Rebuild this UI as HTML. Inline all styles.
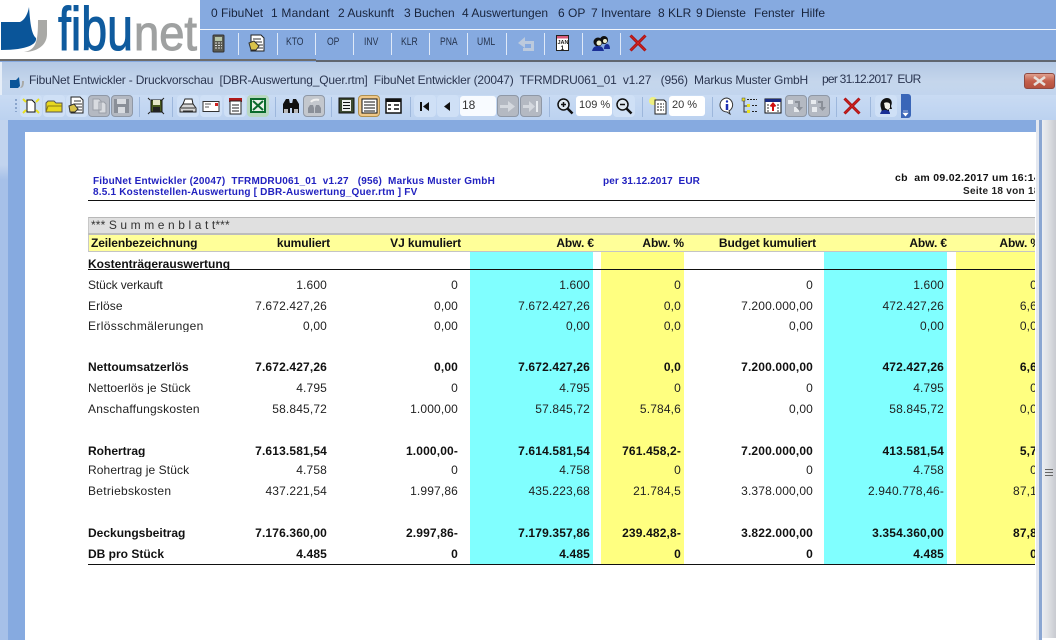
<!DOCTYPE html>
<html><head><meta charset="utf-8"><style>
html,body{margin:0;padding:0;width:1056px;height:640px;overflow:hidden;background:#86aae0}
*{box-sizing:border-box}
body{font-family:"Liberation Sans",sans-serif;position:relative;color:#222}
.a{position:absolute}
.t{position:absolute;white-space:pre}
.m{position:absolute;top:6px;font-size:12px;line-height:14px;color:#18243c;white-space:pre}
.sep{position:absolute;top:33px;width:1px;height:22px;background:#dfe9f8}
.lb{position:absolute;top:37px;font-size:11px;line-height:11px;color:#26344e;white-space:pre;transform:scaleX(.78);transform-origin:0 0}
.ts{position:absolute;top:97px;width:1px;height:20px;background:#9db7dc}
.btn{position:absolute;top:95px;width:22px;height:22px;border-radius:4px;background:#cfe0f6}
.btn.g{background:#b4b9c2;border:1px solid #8f98a6}
.ic{position:absolute}
.inp{position:absolute;top:96px;height:20px;background:#fff;font-size:11px;line-height:19px;color:#333;white-space:pre}
.r{position:absolute;left:0;width:1035px;height:15px;overflow:hidden;font-size:12px;line-height:15px;color:#222}
.r span{position:absolute;top:0;white-space:pre;letter-spacing:.15px}
.r.b{font-weight:bold;color:#111}
.r span:nth-child(1){left:88px;letter-spacing:.1px}
.r.b span:nth-child(1){letter-spacing:0}
.r span:nth-child(2){right:708px}
.r span:nth-child(3){right:577px}
.r span:nth-child(4){right:445px}
.r span:nth-child(5){right:354px}
.r span:nth-child(6){right:222px}
.r span:nth-child(7){right:91px}
.r span:nth-child(8){right:-2px}
.h span,.r.h span:nth-child(1){letter-spacing:-.1px}
.h span:nth-child(2){right:705px}
.h span:nth-child(3){right:574px}
.h span:nth-child(4){right:441px}
.h span:nth-child(5){right:351px}
.h span:nth-child(6){right:219px}
.h span:nth-child(7){right:88px}
.h span:nth-child(8){right:-6px}
.blue{font-size:10px;line-height:11px;font-weight:bold;color:#2222c0;letter-spacing:.2px}
</style></head><body>

<!-- top logo -->
<div class="a" style="left:0;top:0;width:200px;height:59px;background:#fff;overflow:hidden">
<svg width="200" height="59" style="position:absolute;left:0;top:0">
<path d="M1 22 L20 22 C25 20 28 13 29 7 C30 20 31 34 36 38 C37 44 28 50 1 50 Z" fill="#0a5599"/>
<path d="M24 52 C36 50 38 42 38 20 L47 20 L47 34 C47 46 36 52 24 52 Z" fill="#a9a9a6"/>
<text x="58" y="50" font-family="Liberation Sans" font-size="61" fill="#0f5b9e" stroke="#0f5b9e" stroke-width="1.100" textLength="75" lengthAdjust="spacingAndGlyphs">fibu</text>
<text x="134" y="50" font-family="Liberation Sans" font-size="49" fill="#9fa1a1" stroke="#9fa1a1" stroke-width="1" textLength="63" lengthAdjust="spacingAndGlyphs">net</text>
</svg>
</div>

<!-- menu -->
<div class="a" style="left:200px;top:29px;width:856px;height:1px;background:#f2f6fc"></div>
<span class="m" style="left:211px">0 FibuNet</span>
<span class="m" style="left:271px;letter-spacing:.2px">1 Mandant</span>
<span class="m" style="left:338px">2 Auskunft</span>
<span class="m" style="left:404px">3 Buchen</span>
<span class="m" style="left:462px">4 Auswertungen</span>
<span class="m" style="left:558px">6 OP</span>
<span class="m" style="left:591px">7 Inventare</span>
<span class="m" style="left:658px">8 KLR</span>
<span class="m" style="left:696px;letter-spacing:-.1px">9 Dienste</span>
<span class="m" style="left:754px">Fenster</span>
<span class="m" style="left:801px">Hilfe</span>

<!-- top toolbar -->
<svg class="ic" style="left:212px;top:34px" width="14" height="20"><rect x="1" y="1" width="11" height="17" rx="1" fill="#5a5a50" stroke="#333"/><rect x="3" y="3" width="7" height="4" fill="#b6c4a6"/><path d="M3 9h7M3 11.5h7M3 14h7" stroke="#ddd" stroke-dasharray="2 1"/></svg>
<div class="sep" style="left:238px"></div>
<svg class="ic" style="left:248px;top:34px" width="18" height="18"><path d="M3 1h10l3 3v13H3z" fill="#fff" stroke="#222"/><path d="M5 5h8M5 8h9M9 11h6M9 14h6" stroke="#333"/><path d="M1 9l5-2 5 5-3 4H3z" fill="#d8c24a" stroke="#333"/></svg>
<div class="sep" style="left:277px"></div>
<span class="lb" style="left:286px">KTO</span>
<div class="sep" style="left:315px"></div>
<span class="lb" style="left:327px">OP</span>
<div class="sep" style="left:353px"></div>
<span class="lb" style="left:364px">INV</span>
<div class="sep" style="left:391px"></div>
<span class="lb" style="left:401px">KLR</span>
<div class="sep" style="left:429px"></div>
<span class="lb" style="left:440px">PNA</span>
<div class="sep" style="left:467px"></div>
<span class="lb" style="left:477px">UML</span>
<div class="sep" style="left:506px"></div>
<svg class="ic" style="left:516px;top:33px" width="22" height="20"><path d="M2 10l7-6v4h9v10H7v-3h8v-4H9v4z" fill="#bccadd"/></svg>
<div class="sep" style="left:544px"></div>
<svg class="ic" style="left:555px;top:34px" width="16" height="18"><rect x="1.500" y="1.500" width="12" height="15" fill="#fff" stroke="#222"/><rect x="2" y="2" width="11" height="2.500" fill="#d85a7a"/><text x="2.500" y="10" font-family="Liberation Sans" font-size="5.500" font-weight="bold" fill="#222">JAN</text><text x="5.500" y="16" font-family="Liberation Sans" font-size="6.500" font-weight="bold" fill="#222">1</text></svg>
<div class="sep" style="left:582px"></div>
<svg class="ic" style="left:591px;top:34px" width="20" height="18"><ellipse cx="13" cy="6" rx="4" ry="4" fill="#111"/><ellipse cx="7" cy="8" rx="4.500" ry="4.500" fill="#111"/><ellipse cx="8" cy="9" rx="2.500" ry="2.500" fill="#eec"/><ellipse cx="14" cy="7" rx="2" ry="2" fill="#eec"/><path d="M1 17c1-4 3-5 6-5s5 1 6 5z" fill="#1a2f96"/><path d="M13 15c0-3 1-5 3-5s3 2 3 5z" fill="#1a2f96"/></svg>
<div class="sep" style="left:620px"></div>
<svg class="ic" style="left:628px;top:34px" width="20" height="18"><path d="M2.500 1.500 L17.500 16.500 M17.500 1.500 L2.500 16.500" stroke="#a31212" stroke-width="3"/><path d="M2.500 1.500 L17.500 16.500 M17.500 1.500 L2.500 16.500" stroke="#d42020" stroke-width="1"/></svg>

<!-- dark divider -->
<div class="a" style="left:0;top:59px;width:316px;height:2px;background:#6d6d6d"></div>
<div class="a" style="left:316px;top:60px;width:740px;height:2px;background:#5f6670"></div>

<!-- window title -->
<div class="a" style="left:0;top:62px;width:1056px;height:33px;background:linear-gradient(#b3c8e4,#c5d6ec 60%,#c2d5ee)"></div>
<div class="a" style="left:0;top:62px;width:2px;height:33px;background:#e6eef8"></div>
<svg class="ic" style="left:9px;top:76px" width="16" height="13"><path d="M1 4h6l3-3 1 9-2 2H1z" fill="#0a5599"/><path d="M11 12c3 0 4-2 4-7h-2c0 3 0 5-2 7z" fill="#a9a9a6"/></svg>
<span class="t" style="left:29px;top:73px;font-size:12px;line-height:14px;color:#2a3550;letter-spacing:-.19px">FibuNet Entwickler - Druckvorschau  [DBR-Auswertung_Quer.rtm]  FibuNet Entwickler (20047)  TFRMDRU061_01  v1.27   (956)  Markus Muster GmbH</span>
<span class="t" style="left:822px;top:72px;font-size:12px;line-height:14px;color:#2a3550;letter-spacing:-.75px">per 31.12.2017  EUR</span>
<div class="a" style="left:1024px;top:73px;width:31px;height:16px;border-radius:3px;background:linear-gradient(#dfa08f,#c4604c 50%,#b5503e);border:1px solid #8e4a42"></div>
<svg class="ic" style="left:1032px;top:76px" width="15" height="10"><path d="M2 1l11 8M13 1L2 9" stroke="#e6e0dc" stroke-width="2.600"/></svg>

<!-- toolbar bar -->
<div class="a" style="left:0;top:95px;width:1056px;height:25px;background:linear-gradient(#c9dbf3,#bcd2f0)"></div>
<div class="a" style="left:901px;top:94px;width:10px;height:24px;background:#3a66b8;border-radius:0 3px 3px 0"></div>
<svg class="ic" style="left:902px;top:110px" width="8" height="8"><path d="M1 1h5M1 3h5L3.500 6z" fill="#fff" stroke="#fff" stroke-width=".6"/></svg>
<div class="a" style="left:15px;top:99px;width:2px;height:13px;background:repeating-linear-gradient(#8aa5cc 0 2px,transparent 2px 4px)"></div>

<!-- buttons row -->
<div class="btn" style="left:20px"></div>
<svg class="ic" style="left:20px;top:96px" width="22" height="20"><path d="M3 3l3 3M19 3l-3 3M3 17l3-3M19 17l-3-3" stroke="#e8e020" stroke-width="2"/><path d="M7 4h5l3 3v9H7z" fill="#fff" stroke="#111"/></svg>
<div class="btn" style="left:43px"></div>
<svg class="ic" style="left:43px;top:96px" width="22" height="20"><path d="M3 7l2-2h6l2 2h6v9H3z" fill="#e8d820" stroke="#555"/><path d="M3 16l2-6h14" fill="none" stroke="#8a7a10"/></svg>
<div class="btn" style="left:66px"></div>
<svg class="ic" style="left:67px;top:96px" width="20" height="19"><path d="M4 1h9l3 3v13H4z" fill="#fff" stroke="#222"/><path d="M7 5h7M7 8h8M10 11h5M10 14h5" stroke="#333"/><path d="M2 10l5-2 4 5-3 3H3z" fill="#d8c24a" stroke="#333"/></svg>
<div class="btn g" style="left:88px"></div>
<svg class="ic" style="left:91px;top:98px" width="18" height="16"><path d="M2 1h6l2 2v9H2zM8 4h5l2 2v9H8z" fill="#d8dbe0" stroke="#9a9fa8"/></svg>
<div class="btn g" style="left:111px"></div>
<svg class="ic" style="left:113px;top:98px" width="18" height="16"><rect x="1" y="1" width="15" height="14" fill="#8a8f98"/><rect x="4" y="1" width="9" height="5" fill="#d8dbe0"/><rect x="5" y="9" width="7" height="6" fill="#d8dbe0"/></svg>
<div class="ts" style="left:139px"></div>
<svg class="ic" style="left:146px;top:96px" width="20" height="20"><path d="M2 2l2 2M18 2l-2 2M2 18l2-2M18 18l-2-2" stroke="#222"/><rect x="5" y="4" width="11" height="12" fill="#4a5a20" stroke="#111"/><rect x="7" y="4" width="7" height="5" fill="#e6e6c8"/><rect x="7" y="11" width="7" height="5" fill="#222"/></svg>
<div class="ts" style="left:172px"></div>
<div class="btn" style="left:177px"></div>
<svg class="ic" style="left:178px;top:97px" width="20" height="18"><path d="M5 7l2-5h7l1 5z" fill="#fff" stroke="#222"/><path d="M2 11l3-4h10l3 4v4H2z" fill="#d6d6d6" stroke="#222"/><path d="M3 11h14M5 14h10" stroke="#333"/></svg>
<div class="btn" style="left:200px"></div>
<svg class="ic" style="left:202px;top:100px" width="19" height="14"><rect x="1" y="1.500" width="16" height="10" fill="#fff" stroke="#333"/><path d="M3 4h6M3 7h4" stroke="#555"/><rect x="13" y="3" width="3" height="3" fill="#d02020"/></svg>
<div class="btn" style="left:224px"></div>
<svg class="ic" style="left:226px;top:96px" width="19" height="20"><rect x="3" y="2" width="13" height="4" fill="#b01818"/><rect x="4" y="5" width="11" height="13" fill="#fff" stroke="#222"/><path d="M6 9h7M6 12h7M6 15h7" stroke="#222"/></svg>
<div class="btn" style="left:247px;background:#b8d8c0"></div>
<svg class="ic" style="left:249px;top:97px" width="18" height="17"><rect x="1" y="1" width="16" height="15" fill="#0b6b2c"/><rect x="3" y="3" width="12" height="11" fill="#e8f2e8"/><path d="M4 4l10 9M14 4L4 13" stroke="#0b6b2c" stroke-width="2"/></svg>
<div class="ts" style="left:275px"></div>
<svg class="ic" style="left:281px;top:97px" width="20" height="18"><path d="M2 16V7l3-5h3l1 5v9zM11 16V7l1-5h3l3 5v9z" fill="#111"/><rect x="7" y="6" width="6" height="5" fill="#111"/><rect x="3" y="12" width="4" height="4" fill="#bbb"/><rect x="13" y="12" width="4" height="4" fill="#bbb"/></svg>
<div class="btn g" style="left:303px;background:#c3c7cd"></div>
<svg class="ic" style="left:305px;top:97px" width="19" height="18"><path d="M3 16v-5l2-3h3l1 3v5zM10 16v-5l1-3h3l2 3v5z" fill="#8a8f98"/><path d="M6 5a6 4 0 0 1 8-2" fill="none" stroke="#f0f0f0" stroke-width="2"/></svg>
<div class="ts" style="left:331px"></div>
<svg class="ic" style="left:338px;top:97px" width="17" height="17"><rect x="1" y="1" width="15" height="15" fill="#3d4a30" stroke="#111"/><rect x="4" y="3" width="9" height="11" fill="#eee"/><path d="M5 5.500h7M5 8.500h7M5 11.500h7" stroke="#111"/></svg>
<div class="btn" style="left:358px;background:#f0c888;border:1px solid #b09050"></div>
<svg class="ic" style="left:361px;top:98px" width="17" height="16"><rect x="1" y="1" width="15" height="14" fill="#fff" stroke="#111"/><path d="M3 4h11M3 7h11M3 10h11M3 13h11" stroke="#111"/></svg>
<svg class="ic" style="left:385px;top:98px" width="17" height="16"><rect x="1" y="1" width="15" height="14" fill="#fff" stroke="#111" stroke-width="1.500"/><rect x="1" y="1" width="15" height="3" fill="#111"/><path d="M3 7h3M3 11h3M9 7h5M9 11h5" stroke="#111" stroke-width="1.500"/></svg>
<div class="ts" style="left:410px"></div>
<div class="btn" style="left:414px"></div>
<svg class="ic" style="left:418px;top:100px" width="14" height="13"><path d="M2 2h2v9H2zM11 2v9L5 6.500z" fill="#111"/></svg>
<div class="btn" style="left:437px"></div>
<svg class="ic" style="left:441px;top:100px" width="12" height="13"><path d="M9 2v9L3 6.500z" fill="#111"/></svg>
<div class="inp" style="left:460px;width:36px;padding-left:2px;font-size:12px;border-radius:3px;background:#f8fbff">18</div>
<div class="btn g" style="left:497px"></div>
<svg class="ic" style="left:499px;top:99px" width="18" height="15"><path d="M1 6h8V2l7 5.500-7 5.500V9H1z" fill="#d4d8de"/></svg>
<div class="btn g" style="left:520px"></div>
<svg class="ic" style="left:522px;top:99px" width="18" height="15"><path d="M1 6h6V2l6 5.500-6 5.500V9H1z" fill="#d4d8de"/><rect x="14" y="2" width="2" height="11" fill="#e8ecf0"/></svg>
<div class="ts" style="left:549px"></div>
<svg class="ic" style="left:556px;top:97px" width="19" height="18"><circle cx="7.500" cy="7.500" r="5.500" fill="#dfe8f0" stroke="#111" stroke-width="1.500"/><path d="M5 7.500h5M7.500 5v5" stroke="#111" stroke-width="1.500"/><path d="M11.500 11.500l5 5" stroke="#111" stroke-width="2.500"/></svg>
<div class="inp" style="left:576px;width:36px;padding-left:3px;border-radius:3px">109 %</div>
<div class="btn" style="left:613px"></div>
<svg class="ic" style="left:615px;top:97px" width="19" height="18"><circle cx="7.500" cy="7.500" r="5.500" fill="#dfe8f0" stroke="#111" stroke-width="1.500"/><path d="M5 7.500h5" stroke="#111" stroke-width="1.500"/><path d="M11.500 11.500l5 5" stroke="#111" stroke-width="2.500"/></svg>
<div class="ts" style="left:642px"></div>
<svg class="ic" style="left:648px;top:96px" width="20" height="20"><circle cx="5" cy="5" r="4" fill="#eef080"/><path d="M7 4h9l2 2v12H7z" fill="#fff" stroke="#222"/><path d="M9 8h7M9 11h7M9 14h7" stroke="#222" stroke-dasharray="2 1"/></svg>
<div class="inp" style="left:669px;width:36px;padding-left:3px;border-radius:3px">20 %</div>
<div class="ts" style="left:712px"></div>
<svg class="ic" style="left:718px;top:97px" width="18" height="18"><path d="M9 1a7 7 0 1 0 0 14l3 2-1-3a7 7 0 0 0-2-13z" fill="#fff" stroke="#333"/><circle cx="9" cy="4.500" r="1.200" fill="#1c2eb0"/><path d="M9 7v6" stroke="#1c2eb0" stroke-width="2.500"/></svg>
<svg class="ic" style="left:741px;top:97px" width="18" height="18"><rect x="1" y="1" width="3" height="3" fill="#e8e020" stroke="#444" stroke-width=".5"/><path d="M3 4v11h3M3 9h3" stroke="#333" fill="none"/><rect x="6" y="7" width="3" height="3" fill="#e8e020"/><rect x="6" y="13" width="3" height="3" fill="#e8e020"/><path d="M6 2.500h10M11 8.500h6M11 14.500h6" stroke="#222" stroke-dasharray="2 1"/></svg>
<svg class="ic" style="left:764px;top:98px" width="18" height="16"><rect x="1" y="1" width="16" height="14" fill="#fff" stroke="#111"/><rect x="1" y="1" width="16" height="3" fill="#1a2a80"/><path d="M9 13V6M6.500 8.500L9 5.500l2.500 3" stroke="#d01010" stroke-width="2" fill="none"/><path d="M3 7h2M3 10h2M3 13h2M13 7h2M13 10h2M13 13h2" stroke="#333"/></svg>
<div class="btn g" style="left:785px"></div>
<svg class="ic" style="left:787px;top:98px" width="19" height="16"><path d="M1 2h5v4H1zM7 9h5v5H7z" fill="#e8ebef"/><path d="M13 3v6l3 0-3.500 4L9 9h2V5H8V3z" fill="#8a8f98"/></svg>
<div class="btn g" style="left:808px"></div>
<svg class="ic" style="left:810px;top:98px" width="19" height="16"><path d="M1 2h5v4H1zM2 9h5v5H2z" fill="#e8ebef"/><path d="M13 3v6l3 0-3.500 4L9 9h2V5H8V3z" fill="#8a8f98"/></svg>
<div class="ts" style="left:836px"></div>
<svg class="ic" style="left:842px;top:97px" width="20" height="18"><path d="M2.500 1.500 L17.500 16.500 M17.500 1.500 L2.500 16.500" stroke="#a31212" stroke-width="3"/><path d="M2.500 1.500 L17.500 16.500 M17.500 1.500 L2.500 16.500" stroke="#d42020" stroke-width="1"/></svg>
<div class="ts" style="left:870px"></div>
<div class="btn" style="left:875px"></div>
<svg class="ic" style="left:877px;top:97px" width="18" height="18"><path d="M4 11c-2-6 2-10 6-10s6 4 4 8l1 3-3 0v3H5z" fill="#111"/><path d="M7 6c2-1 5-1 6 1l0 4-2 2-3-2z" fill="#f0f0e8"/><path d="M3 17c1-3 2-4 5-4s5 1 5 4z" fill="#1a2f96"/></svg>

<!-- window body -->
<div class="a" style="left:0;top:120px;width:8px;height:520px;background:linear-gradient(#c2d4ee,#c2d4ee 45px,#a6c0e8 60px)"></div>
<div class="a" style="left:8px;top:120px;width:1028px;height:12px;background:#86aae0"></div>
<div class="a" style="left:8px;top:132px;width:17px;height:508px;background:#86aae0"></div>

<!-- page -->
<div class="a" style="left:25px;top:132px;width:1011px;height:508px;background:#fff"></div>

<!-- right side frame -->
<div class="a" style="left:1036px;top:120px;width:3px;height:520px;background:#e4e8f0"></div>
<div class="a" style="left:1039px;top:120px;width:3px;height:520px;background:#8aa6d2"></div>
<div class="a" style="left:1042px;top:120px;width:14px;height:518px;background:linear-gradient(90deg,#eceef2,#dcdee2 50%,#c8cad0)"></div>
<div class="a" style="left:1042px;top:638px;width:14px;height:2px;background:#fff"></div>
<svg class="ic" style="left:1045px;top:468px" width="8" height="9"><path d="M0 1.500h8M0 4.500h8M0 7.500h8" stroke="#666"/></svg>

<!-- report header -->
<span class="t blue" style="left:93px;top:176px">FibuNet Entwickler (20047)  TFRMDRU061_01  v1.27   (956)  Markus Muster GmbH</span>
<span class="t blue" style="left:93px;top:187px">8.5.1 Kostenstellen-Auswertung [ DBR-Auswertung_Quer.rtm ] FV</span>
<span class="t blue" style="left:603px;top:176px;letter-spacing:.1px">per 31.12.2017  EUR</span>
<div class="a" style="left:0;top:165px;width:1035px;height:40px;overflow:hidden">
<span class="t" style="left:895px;top:7px;font-size:10.500px;line-height:13px;font-weight:bold;color:#111;letter-spacing:.3px">cb  am 09.02.2017 um 16:14</span>
<span class="t" style="left:963px;top:21px;font-size:10px;line-height:12px;font-weight:bold;color:#222;letter-spacing:.3px">Seite 18 von 18</span>
</div>
<div class="a" style="left:88px;top:200px;width:947px;height:1px;background:#111"></div>

<!-- grey + header bands -->
<div class="a" style="left:88px;top:217px;width:947px;height:17px;background:#e0e0e0;border-top:1px solid #b8b8b8;border-left:1px solid #c8c8c8"></div>
<div class="a" style="left:88px;top:233px;width:947px;height:2px;background:#bdbdbd"></div>
<div class="a" style="left:88px;top:235px;width:947px;height:17px;background:#ffff99;border-left:1px solid #c8c8c8;border-bottom:1px solid #c4c4c4"></div>
<span class="t" style="left:91px;top:218px;font-size:12px;line-height:14px;color:#333;letter-spacing:.12px">*** S u m m e n b l a t t***</span>

<!-- coloured columns -->
<div class="a" style="left:470px;top:252px;width:123px;height:312px;background:#80ffff"></div>
<div class="a" style="left:601px;top:252px;width:83px;height:312px;background:#ffff80"></div>
<div class="a" style="left:824px;top:252px;width:123px;height:312px;background:#80ffff"></div>
<div class="a" style="left:956px;top:252px;width:79px;height:312px;background:#ffff80"></div>

<div class="r b h" style="top:236px"><span style="left:91px">Zeilenbezeichnung</span><span>kumuliert</span><span>VJ kumuliert</span><span>Abw. €</span><span>Abw. %</span><span>Budget kumuliert</span><span>Abw. €</span><span>Abw. %</span></div>

<div class="r b" style="top:257px;height:12px"><span>Kostenträgerauswertung</span></div>
<div class="a" style="left:88px;top:269px;width:947px;height:1px;background:#111"></div>

<div class="r" style="top:278px"><span style="letter-spacing:-.1px">Stück verkauft</span><span>1.600</span><span>0</span><span>1.600</span><span>0</span><span>0</span><span>1.600</span><span>0</span></div>
<div class="r" style="top:299px"><span>Erlöse</span><span>7.672.427,26</span><span>0,00</span><span>7.672.427,26</span><span>0,0</span><span>7.200.000,00</span><span>472.427,26</span><span>6,6</span></div>
<div class="r" style="top:319px;height:13px"><span style="letter-spacing:.35px">Erlösschmälerungen</span><span>0,00</span><span>0,00</span><span>0,00</span><span>0,0</span><span>0,00</span><span>0,00</span><span>0,0</span></div>
<div class="r b" style="top:360px"><span>Nettoumsatzerlös</span><span>7.672.427,26</span><span>0,00</span><span>7.672.427,26</span><span>0,0</span><span>7.200.000,00</span><span>472.427,26</span><span>6,6</span></div>
<div class="r" style="top:381px;height:13px"><span>Nettoerlös je Stück</span><span>4.795</span><span>0</span><span>4.795</span><span>0</span><span>0</span><span>4.795</span><span>0</span></div>
<div class="r" style="top:402px;height:14px"><span style="letter-spacing:.22px">Anschaffungskosten</span><span>58.845,72</span><span>1.000,00</span><span>57.845,72</span><span>5.784,6</span><span>0,00</span><span>58.845,72</span><span>0,0</span></div>
<div class="r b" style="top:444px;height:13px"><span>Rohertrag</span><span>7.613.581,54</span><span>1.000,00-</span><span>7.614.581,54</span><span>761.458,2-</span><span>7.200.000,00</span><span>413.581,54</span><span>5,7</span></div>
<div class="r" style="top:463px;height:14px"><span>Rohertrag je Stück</span><span>4.758</span><span>0</span><span>4.758</span><span>0</span><span>0</span><span>4.758</span><span>0</span></div>
<div class="r" style="top:484px"><span style="letter-spacing:.28px">Betriebskosten</span><span>437.221,54</span><span>1.997,86</span><span>435.223,68</span><span>21.784,5</span><span>3.378.000,00</span><span>2.940.778,46-</span><span>87,1</span></div>
<div class="r b" style="top:526px"><span>Deckungsbeitrag</span><span>7.176.360,00</span><span>2.997,86-</span><span>7.179.357,86</span><span>239.482,8-</span><span>3.822.000,00</span><span>3.354.360,00</span><span>87,8</span></div>
<div class="r b" style="top:547px"><span>DB pro Stück</span><span>4.485</span><span>0</span><span>4.485</span><span>0</span><span>0</span><span>4.485</span><span>0</span></div>
<div class="a" style="left:88px;top:564px;width:947px;height:1px;background:#111"></div>
</body></html>
